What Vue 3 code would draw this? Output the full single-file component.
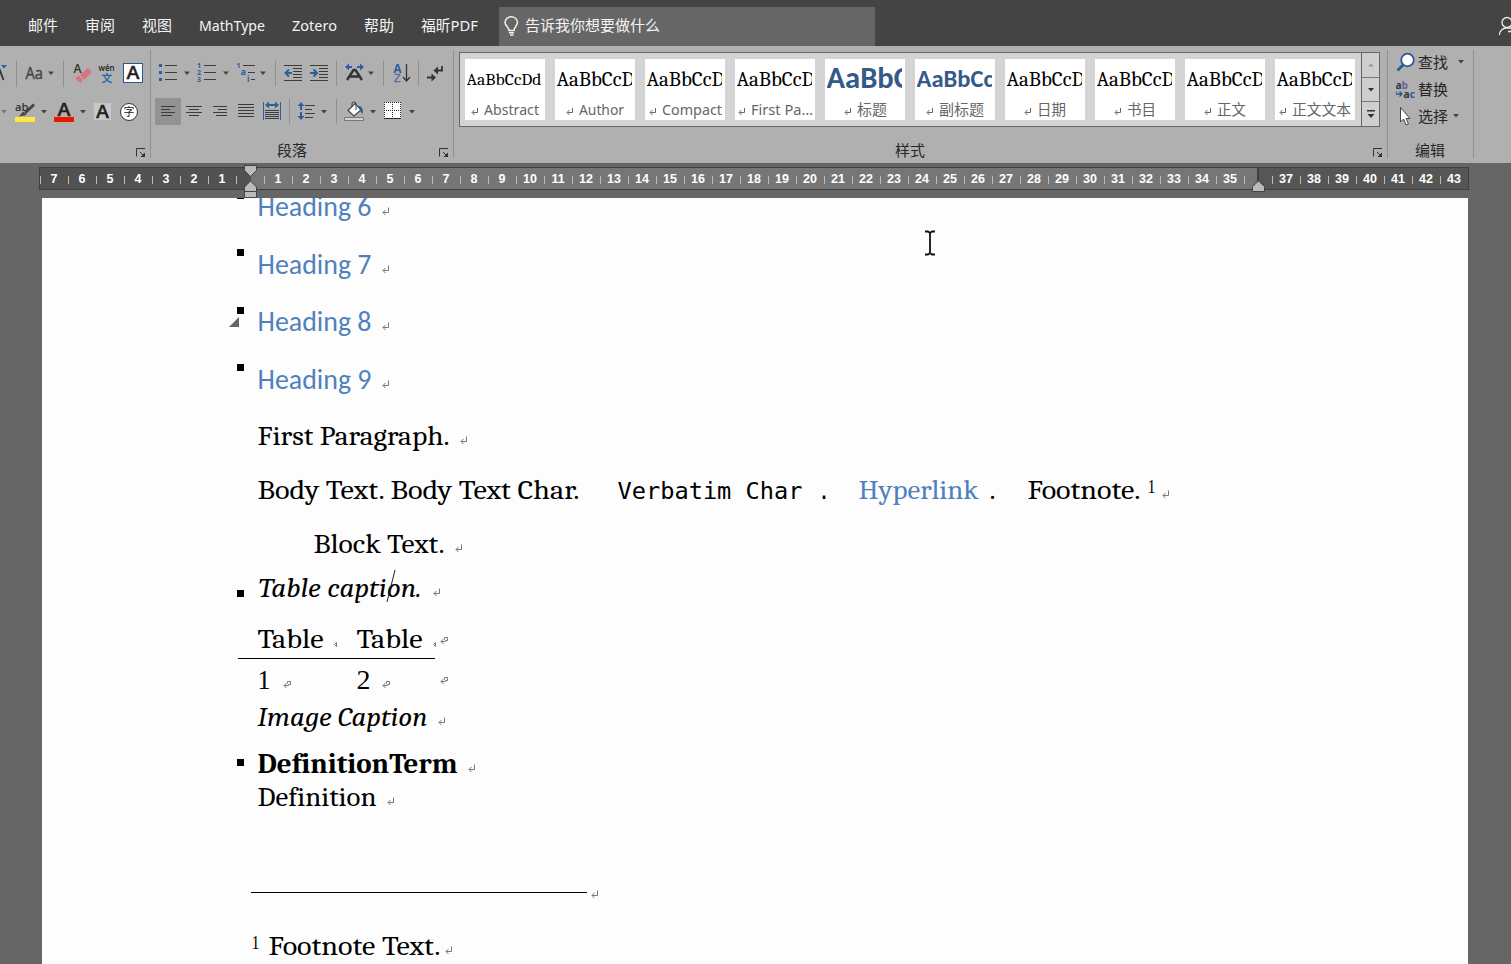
<script setup>
import { h } from 'vue'

// Real text stretched to a fixed advance width; baseline sits 8px above the box bottom.
const Fit = (p) =>
  h('svg', { width: p.w, height: 30, class: 'fit' }, [
    h('text', { x: 0, y: 22, textLength: p.w, lengthAdjust: 'spacingAndGlyphs', fill: 'currentColor' }, p.t),
  ])
Fit.props = ['t', 'w']

// Small drop-down triangle
const Arrow = (p) => h('path', { d: `M${p.x} ${p.y}h6l-3 3.4z`, fill: '#444' })
Arrow.props = ['x', 'y']

const Launcher = () =>
  h('svg', { width: 10, height: 10, viewBox: '0 0 10 10', fill: 'none', stroke: '#333' }, [
    h('path', { d: 'M.5 8.500V.5H9M4 4l4 4' }),
    h('path', { d: 'M9 4.500V9H4.500z', fill: '#333', stroke: 'none' }),
  ])

const place = (items, start) => {
  let at = start
  return items.map(([t, x, w, c = '']) => {
    const gap = x - at
    at = x + w
    return { t, w, c, gap }
  })
}

const tabs = place(
  [['邮件', 28, 30], ['审阅', 85, 30], ['视图', 142, 30], ['MathType', 199, 66], ['Zotero', 292, 45], ['帮助', 364, 30], ['福昕PDF', 421, 57]],
  0
)

const previewWidth = { small: 75, title: 132, subtitle: 106, '': 89 }
const styles = [
  ['Abstract', 55, 'small'], ['Author', 45, ''], ['Compact', 60, ''], ['First Pa…', 62, ''], ['标题', 30, 'title'],
  ['副标题', 45, 'subtitle'], ['日期', 29, ''], ['书目', 29, ''], ['正文', 29, ''], ['正文文本', 59, ''],
]

const ruler = []
for (let n = -7; n <= 43; n++) ruler.push(n === 0 || n === 36 ? '' : Math.abs(n))

const P = 'mark'
const doc = [
  { base: 216, dot: 25, kind: 'head', items: [['Heading 6', 258, 114], [P, 382, 8]] },
  { base: 274, dot: 26, kind: 'head', items: [['Heading 7', 258, 114], [P, 382, 8]] },
  { base: 331, dot: 25, kind: 'head', fold: true, items: [['Heading 8', 258, 114], [P, 382, 8]] },
  { base: 389, dot: 26, kind: 'head', items: [['Heading 9', 258, 114], [P, 382, 8]] },
  { base: 445, items: [['First Paragraph.', 258, 192], [P, 460, 8]] },
  {
    base: 499,
    items: [
      ['Body Text. Body Text Char.', 258, 322], ['Verbatim Char', 618, 185, 'mono'], ['.', 818, 13, 'mono'],
      ['Hyperlink', 859, 120, 'link'], ['.', 990, 6], ['Footnote.', 1028, 113], ['1', 1148, 8, 'sup'], [P, 1162, 8],
    ],
  },
  { base: 553, items: [['Block Text.', 314, 131], [P, 455, 8]] },
  { base: 597, dot: 8, kind: 'ital', caret: true, items: [['Table caption.', 259, 163], [P, 433, 8]] },
  { base: 648, items: [['Table', 258, 66], ['tick', 333, 8], ['Table', 357, 66], ['tick', 432, 8], ['cell', 440, 8, 'raise low']] },
  { base: 689, rule: true, items: [['1', 258, 13, 'light'], ['cell', 283, 8], ['2', 357, 14, 'light'], ['cell', 382, 8], ['cell', 440, 8, 'raise']] },
  { base: 726, kind: 'ital', items: [['Image Caption', 258, 170], [P, 438, 8]] },
  { base: 773, dot: 15, kind: 'bold', items: [['DefinitionTerm', 258, 200], [P, 468, 8]] },
  { base: 806, items: [['Definition', 258, 119], [P, 387, 8]] },
  { base: 899, items: [['line', 251, 336], [P, 591, 8]] },
  { base: 955, items: [['1', 252, 8, 'sup'], ['Footnote Text.', 269, 172], [P, 445, 8]] },
].map((l, i, all) => ({ ...l, height: l.base + 8 - (i ? all[i - 1].base + 8 : 198), items: place(l.items, 258) }))

const marks = {
  mark: 'M6.5 13.500V18.500H1M3.500 16L1 18.500L3.500 21',
  cell: 'M3.500 16L1 18.500L3.500 21M1 18.500H5.500V17.500H7.500V14.500H4.500V16.500',
  tick: 'M3.500 16.500L1.500 18.500L3.500 20.500z',
}
</script>

<template>
  <div class="app">
    <header class="tabs">
      <nav class="tablist">
        <Fit v-for="t in tabs" :key="t.t" :t="t.t" :w="t.w" :style="{ marginLeft: t.gap + 'px' }" />
      </nav>
      <div class="tell">
        <svg width="16" height="22" viewBox="0 0 16 22" fill="none" stroke="#f2f2f2" stroke-width="1.500">
          <path d="M5 15.500C5 12 1 11 1 7.300A6.300 6.300 0 0 1 13.500 7.300C13.500 11 10 12 10 15.500zM5 17.700h5M6 20h3.500" />
        </svg>
        <Fit t="告诉我你想要做什么" :w="135" />
      </div>
      <svg class="user" width="16" height="24" viewBox="1495 14 16 24" fill="none" stroke="#eee" stroke-width="1.300">
        <circle cx="1507" cy="22.500" r="5" /><path d="M1499.500 35c0-4 3-7 7-7h5M1508 31.500h4" />
      </svg>
    </header>

    <section class="ribbon">
      <div class="group font">
        <div class="tools">
          <svg width="150" height="38" viewBox="0 54 150 38">
            <path d="M-5 80L-1 68L3.500 80" stroke="#333" stroke-width="1.800" fill="none" /><path d="M1 65h6l-3 3.500z" fill="#2a5fa0" />
            <path class="sep" d="M16.500 61v26M63.500 61v26" />
            <text x="25.500" y="78.500" class="ui" font-size="15.500" fill="#444" stroke="#444" stroke-width=".4" textLength="17.500" lengthAdjust="spacingAndGlyphs">Aa</text><Arrow :x="48" :y="71.5" />
            <text x="73.500" y="73" class="ui" font-size="12" font-weight="600" fill="#333" textLength="8" lengthAdjust="spacingAndGlyphs">A</text>
            <path d="M80 74.500l8-6.500 3 2.500v3l-7.500 6.500z" fill="#d9737e" /><path d="M79 75.500l3.500 5-2 2.500-5-4v-1z" fill="#d9737e" />
            <text x="98.500" y="71" class="ui" font-size="9" font-weight="600" fill="#222" textLength="16" lengthAdjust="spacingAndGlyphs">wén</text>
            <text x="101.500" y="82" class="cjk" font-size="10.500" fill="#2060ad" stroke="#2060ad" stroke-width=".3">文</text>
            <rect x="123.500" y="63.500" width="19" height="19" fill="#fff" stroke="#285894" />
            <text x="126.500" y="79" class="ui" font-size="18.500" font-weight="600" fill="#222" stroke="#222" stroke-width=".3" textLength="13" lengthAdjust="spacingAndGlyphs">A</text>
          </svg>
          <svg width="150" height="38" viewBox="0 92 150 38">
            <path d="M1 110h6l-3 3.500z" fill="#777" />
            <text x="15" y="110.500" class="ui" font-size="11.500" font-weight="600" fill="#333" textLength="13.500" lengthAdjust="spacingAndGlyphs">ab</text>
            <path d="M34 104.500L25 113" stroke="#444" stroke-width="3" /><path d="M23 111.500l3.500 3.500-7.500 1.500z" fill="#444" /><path d="M15 117h20v5H15z" fill="#ffe83b" />
            <Arrow :x="41" :y="110" />
            <text x="57.500" y="116" class="ui" font-size="17.500" font-weight="600" fill="#222" stroke="#222" stroke-width=".3" textLength="13" lengthAdjust="spacingAndGlyphs">A</text>
            <path d="M54 117h20v5H54z" fill="#ea1600" /><Arrow :x="80" :y="110" />
            <path d="M94 103h17v17H94z" fill="#c8c8c8" />
            <text x="96" y="118" class="ui" font-size="18" font-weight="600" fill="#222" stroke="#222" stroke-width=".3" textLength="13" lengthAdjust="spacingAndGlyphs">A</text>
            <circle cx="129" cy="112" r="8.500" fill="#fff" stroke="#333" /><text x="123.500" y="116" class="cjk" font-size="11" fill="#222">字</text>
          </svg>
        </div>
        <div class="caption"><span class="name" /><Launcher /></div>
      </div>

      <div class="group para">
        <div class="tools">
          <svg width="302" height="38" viewBox="151 54 302 38" fill="none">
            <g fill="#2a5fa0"><rect x="159" y="64" width="3" height="3" /><rect x="159" y="71" width="3" height="3" /><rect x="159" y="78" width="3" height="3" />
              <g class="ui" font-size="7" font-weight="bold"><text x="197" y="68">1</text><text x="197" y="75">2</text><text x="197" y="82">3</text><text x="236.500" y="68">1</text><text x="240.500" y="75" font-size="9">a</text><text x="247" y="81.500" font-size="8">i</text></g>
            </g>
            <path class="ln" d="M165 65.500h12M165 72.500h12M165 79.500h12M204 65.500h12M204 72.500h12M204 79.500h12M243 65.500h12M248 72.500h7M251 79.500h4" />
            <Arrow :x="184" :y="71.5" /><Arrow :x="223" :y="71.5" /><Arrow :x="260" :y="71.5" />
            <path class="sep" d="M275.500 61v25M336.500 61v25M383.500 61v25M418.500 61v25" />
            <path class="ln" d="M284 65.500h18M293 68.500h9M293 71.500h9M293 74.500h9M293 77.500h9M284 80.500h18M310 65.500h18M319 68.500h9M319 71.500h9M319 74.500h9M319 77.500h9M310 80.500h18" />
            <path class="blue" d="M292 73h-6M289 69.500L285.500 73l3.500 3.500M310 73h6M313.500 69.500L317 73l-3.500 3.500" />
            <path d="M345 67l4-3.500v2.500h3v2h-3v2.500zM364 67l-4-3.500v2.500h-3v2h3v2.500z" fill="#2a5fa0" />
            <path d="M347 80l6.500-10h2l6.500 10M349.500 76.500h10" stroke="#333" stroke-width="2.400" /><Arrow :x="368" :y="71.5" />
            <text x="393.500" y="72.500" class="ui" font-size="11.500" font-weight="bold" fill="#2a5fa0">A</text><text x="394" y="82" class="ui" font-size="11.500" fill="#6d6098" stroke="#6d6098" stroke-width=".4">Z</text>
            <path d="M406.500 64v16M403 77l3.500 4 3.500-4" stroke="#333" stroke-width="1.300" />
            <path d="M442 66v4.500h-5M427 77.500h5" stroke="#333" stroke-width="1.800" /><path d="M433.500 70.500l4.500-4v8zM436 77.500l-4.500-4v8z" fill="#333" />
          </svg>
          <svg width="302" height="38" viewBox="151 92 302 38" fill="none">
            <path d="M155 98h26v27h-26z" fill="#929292" />
            <path class="ln" d="M161 106.500h14M161 109.500h9M161 112.500h14M161 115.500h11M186 106.500h16M189 109.500h10M186 112.500h16M189 115.500h10M213 106.500h14M218 109.500h9M213 112.500h14M216 115.500h11M238 104.500h16M238 107.500h16M238 110.500h16M238 113.500h16M238 116.500h16M265 110.500h14M265 112.500h14M265 114.500h14M265 116.500h14M265 118.500h14" />
            <path class="blue thin" d="M263.500 102v18M280.500 102v18" /><path d="M265 105l4-3.500v2.500h6v-2.500l4 3.500-4 3.500v-2.500h-6v2.500z" fill="#2a5fa0" />
            <path class="sep" d="M289.500 99v25M336.500 99v25" />
            <path d="M301 102l3.500 4h-2.500v4h-2v-4h-2.500zM301 120l3.500-4h-2.500v-4h-2v4h-2.500z" fill="#2a5fa0" />
            <path class="ln" d="M305 105.500h10M305 109.500h7M305 113.500h10M305 117.500h8" /><Arrow :x="321" :y="110" />
            <path d="M348 110.500l7-7 6 6.500-7 6z" fill="#fff" stroke="#444" stroke-width="1.200" /><path d="M352 107v-4q2-2.500 4 0v7" stroke="#444" /><path d="M358.500 105.500q5.500 1 4 9l-2-3z" fill="#2a5fa0" />
            <path d="M344.500 117.500h19v3h-19z" fill="#d2d2d2" stroke="#777" /><Arrow :x="370" :y="110" />
            <path d="M384 102h17v17h-17z" fill="#fff" /><path d="M384 102.500h17M384.500 102v17M400.500 102v17M384 110.500h17M392.500 102v17" stroke="#222" stroke-dasharray="1 1" /><path d="M384 118.500h17" stroke="#222" /><Arrow :x="409" :y="110" />
          </svg>
        </div>
        <div class="caption"><div class="name"><Fit t="段落" :w="30" /></div><Launcher /></div>
      </div>

      <div class="group stylegroup">
        <div class="gallery">
          <div class="cards">
            <div v-for="s in styles" :key="s[0]" class="card">
              <div class="preview" :class="s[2]"><Fit t="AaBbCcDd" :w="previewWidth[s[2]]" /></div>
              <div class="label">
                <svg width="8" height="9" viewBox="0 0 8 9" fill="none" stroke="#666"><path d="M6.500 1v4.500H1.500M3.500 3L1 5.500 3.500 8" /></svg>
                <Fit :t="s[0]" :w="s[1]" />
              </div>
            </div>
          </div>
          <div class="scroll">
            <span><svg width="6" height="4"><path d="M0 3.500h6l-3-3z" fill="#999" /></svg></span>
            <span><svg width="6" height="4"><path d="M0 0h6l-3 3.500z" fill="#333" /></svg></span>
            <span><svg width="10" height="8"><path d="M1 0h8v1.500H1zM1.500 4h7L5 8z" fill="#333" /></svg></span>
          </div>
        </div>
        <div class="caption"><div class="name"><Fit t="样式" :w="30" /></div><Launcher /></div>
      </div>

      <div class="group edit">
        <div class="commands">
          <div class="cmd">
            <svg width="20" height="20" viewBox="1396 52 20 20"><path d="M1403 65l-5.500 5.500" stroke="#285894" stroke-width="2.600" /><circle cx="1407.500" cy="60" r="6.300" fill="#fff" stroke="#285894" stroke-width="1.800" /></svg>
            <Fit t="查找" :w="30" /><svg class="far" width="6" height="4"><path d="M0 0h6l-3 3.400z" fill="#444" /></svg>
          </div>
          <div class="cmd">
            <svg width="20" height="20" viewBox="1396 79 20 20" class="ui" font-size="11" font-weight="bold"><text x="1395.500" y="88.500" fill="#333" textLength="12.500" lengthAdjust="spacingAndGlyphs">a<tspan fill="#6d6098">b</tspan></text><text x="1403.500" y="97.500" fill="#333" textLength="11.500" lengthAdjust="spacingAndGlyphs">a<tspan fill="#285894">c</tspan></text><path d="M1396 91v3h6M1399.500 91.500l2.500 2.500-2.500 2.500" fill="none" stroke="#285894" stroke-width="1.300" /></svg>
            <Fit t="替换" :w="30" />
          </div>
          <div class="cmd">
            <svg width="20" height="20" viewBox="1396 106 20 20"><path d="M1400.500 107.500v14.500l3-3 2.500 6 2.500-1-2.500-5.500h4z" fill="#fff" stroke="#444" /></svg>
            <Fit t="选择" :w="30" /><svg class="near" width="6" height="4"><path d="M0 0h6l-3 3.400z" fill="#444" /></svg>
          </div>
        </div>
        <div class="caption"><div class="name"><Fit t="编辑" :w="30" /></div></div>
      </div>
    </section>

    <section class="rulerbar">
      <div class="ruler"><span v-for="(n, i) in ruler" :key="i" class="unit">{{ n }}</span></div>
      <svg class="stops" width="1511" height="35" viewBox="0 163 1511 35">
        <g fill="#bbb" stroke="#444">
          <path d="M244.500 165.500h12v5l-6 6-6-6zM244.500 191.500v-4.500l6-6 6 6v4.500zM244.500 191.500h12v6h-12z" />
          <path d="M1252.500 191.500v-5l6-5.500 6 5.500v5z" />
        </g>
      </svg>
    </section>

    <main class="page">
      <div v-for="(l, i) in doc" :key="i" class="line" :class="l.kind" :style="{ height: l.height + 'px' }">
        <div class="gutter">
          <i v-if="l.dot" class="dot" :style="{ marginBottom: l.dot + 'px' }" />
          <svg v-if="l.fold" class="fold" width="10" height="10"><path d="M10 0v10H0z" fill="#666" /></svg>
        </div>
        <template v-for="(r, j) in l.items" :key="j">
          <i v-if="r.t === 'line'" class="noteline" :style="{ width: r.w + 'px', marginLeft: r.gap + 'px' }" />
          <svg v-else-if="marks[r.t]" class="mark" :class="r.c" width="8" height="30" fill="none" stroke="#777" :style="{ marginLeft: r.gap + 'px' }"><path :d="marks[r.t]" /></svg>
          <Fit v-else :t="r.t" :w="r.w" :class="r.c" :style="{ marginLeft: r.gap + 'px' }" />
        </template>
        <i v-if="l.rule" class="rule" />
        <svg v-if="l.caret" class="caret" width="10" height="34"><path d="M9 1L1 33" stroke="#222" /></svg>
      </div>
      <svg class="ibeam" width="12" height="26" fill="none" stroke="#111" stroke-width="1.800"><path d="M1 1.500h3l2 1.500 2-1.500h3M6 3v20M1 24.500h3l2-1.500 2 1.500h3" /></svg>
    </main>
  </div>
</template>

<style>
body { overflow: hidden; background: #666; }
</style>

<style scoped>
.app { width: 1511px; height: 964px; overflow: hidden; background: #666; display: flex; flex-direction: column; font: 15px/1 "Noto Sans", "Noto Sans CJK SC", sans-serif; }
svg { display: block; flex: none; }
.fit { overflow: visible; }
.ui { font-family: "Open Sans", sans-serif; }
.cjk { font-family: "Noto Sans CJK SC", sans-serif; }
.sep { stroke: #909090; fill: none; }
.ln { stroke: #3c3c3c; fill: none; }
.blue { stroke: #2a5fa0; stroke-width: 2; fill: none; }
.thin { stroke-width: 1; }

.tabs { height: 46px; flex: none; background: #444; color: #f4f4f4; display: flex; align-items: flex-end; }
.tablist { display: flex; width: 499px; height: 39px; }
.tell { flex: none; width: 371px; height: 39px; background: #666; display: flex; padding-left: 5px; gap: 5px; }
.tell > svg:first-child { margin-top: 8px; }
.tell .fit, .tablist .fit { margin-top: 2px; }
.user { margin-left: auto; align-self: center; margin-top: 6px; }

.ribbon { height: 117px; flex: none; background: #b0b0b0; color: #262626; display: flex; }
.group { display: flex; flex-direction: column; position: relative; padding-top: 8px; box-sizing: border-box; }
.group::after { content: ""; position: absolute; right: 0; top: 4px; width: 1px; height: 108px; background: #909090; }
.font { width: 151px; }
.para { width: 303px; }
.stylegroup { width: 934px; padding: 6px 7px 0 5px; }
.edit { width: 86px; }
.tools { height: 76px; flex: none; }
.caption { margin-top: auto; height: 24px; display: flex; }
.caption .name { flex: 1; display: flex; justify-content: center; padding-right: 7px; }
.caption .name .fit { margin-top: -5px; }
.caption > svg { margin: 9px 5px 0 0; }
.stylegroup .caption .name { padding-right: 12px; }
.stylegroup .caption > svg { margin-right: -2px; }
.edit .caption .name { padding-right: 3px; }

.gallery { height: 75px; width: 921px; box-sizing: border-box; border: 1px solid #666; background: #d4d4d4; display: flex; }
.cards { display: flex; gap: 10px; padding: 6px 6px 0 5px; flex: none; }
.card { width: 80px; height: 61px; background: #fff; overflow: hidden; }
.preview { height: 37px; width: 75px; margin-left: 2px; overflow: hidden; color: #000; font-family: Cambria, Caladea, "Liberation Serif", serif; font-size: 20px; padding-top: 5px; box-sizing: border-box; }
.preview.small { font-size: 17px; padding-top: 4px; }
.preview.title, .preview.subtitle { font-family: Calibri, Carlito, Lato, sans-serif; font-weight: bold; color: #345a8a; }
.preview.title { font-size: 30px; padding-top: 7px; }
.preview.subtitle { font-size: 25px; padding-top: 6px; }
.label { display: flex; justify-content: center; gap: 5px; color: #666; font-size: 14.500px; }
.label > svg:first-child { margin-top: 11px; }
.label .fit { margin-top: -3px; }
.scroll { flex: 1; display: flex; flex-direction: column; border-left: 1px solid #666; }
.scroll span { flex: 1; display: flex; align-items: center; justify-content: center; background: #cfcfcf; }
.scroll span + span { border-top: 1px solid #777; }

.commands { height: 84px; display: flex; flex-direction: column; margin-top: -6px; padding-left: 8px; }
.cmd { height: 27px; flex: none; display: flex; align-items: center; }
.cmd .fit { margin-left: 2px; margin-top: -1px; }
.far { margin-left: 10px; }
.near { margin-left: 5px; }

.rulerbar { height: 35px; flex: none; position: relative; padding: 4px 0 0 39px; box-sizing: border-box; }
.ruler { width: 1430px; height: 23px; box-sizing: border-box; border: 1px solid #404040; display: flex; background: linear-gradient(90deg, #525252 211px, #767676 211px, #767676 1217px, #404040 1217px, #404040 1219px, #565656 1219px); }
.unit { width: 28px; flex: none; text-align: center; color: #fff; font: bold 12.500px/22px "Liberation Sans", sans-serif; background: linear-gradient(#bbb, #bbb) 0 8px / 1px 8px no-repeat; }
.stops { position: absolute; left: 0; top: 0; }

.page { flex: none; width: 1426px; height: 766px; margin-left: 42px; background: #fdfdfd; position: relative; overflow: hidden; color: #000; font-family: Cambria, Caladea, "Liberation Serif", serif; font-size: 28px; }
.page .fit, .preview .fit { transform: translateX(-0.5px); }
.line { display: flex; align-items: flex-end; position: relative; }
.gutter { width: 216px; flex: none; display: flex; align-items: flex-end; }
.dot { width: 7px; height: 7px; background: #000; margin-left: 195px; flex: none; }
.fold { margin: 0 0 12px -15px; }
.head { font-family: Calibri, Carlito, Lato, sans-serif; color: #4f81bd; }
.ital { font-style: italic; }
.bold { font-weight: bold; }
.mono { font-family: Consolas, "DejaVu Sans Mono", monospace; font-size: 23.500px; }
.link { color: #4f81bd; }
.light { font-family: "Liberation Serif", serif; }
.sup { font-family: "Liberation Serif", serif; font-size: 19px; margin-bottom: 6px; }
.raise { margin-bottom: 4px; }
.low { margin-bottom: 3px; }
.noteline { height: 1px; background: #000; margin-bottom: 14px; flex: none; }
.rule { position: absolute; left: 196px; top: 2px; width: 197px; height: 1px; background: #000; }
.caret { position: absolute; left: 344px; bottom: 2px; }
.ibeam { position: absolute; left: 882px; top: 32px; }
</style>
